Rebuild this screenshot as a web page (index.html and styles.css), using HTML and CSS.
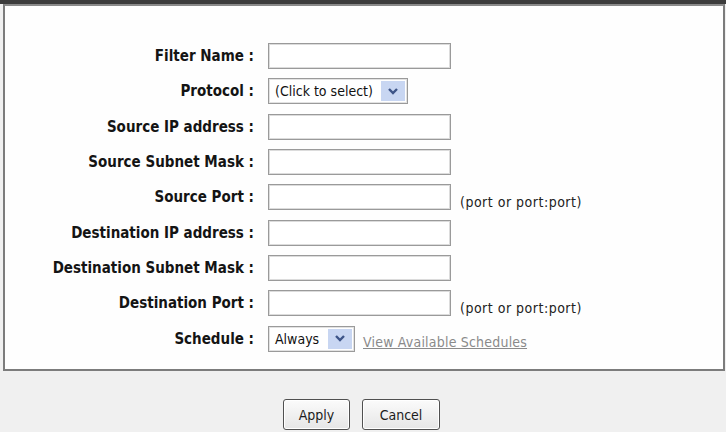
FILE: index.html
```html
<!DOCTYPE html>
<html>
<head>
<meta charset="utf-8">
<link rel="stylesheet" href="styles.css">
</head>
<body>
<div class="topbar"></div>
<div class="box">
  <div class="form">
    <div class="label">Filter Name :</div>
    <div class="field"><span class="input"></span></div>

    <div class="label">Protocol :</div>
    <div class="field"><span class="select select-protocol"><span class="select-text">(Click to select)</span><span class="arrow"><svg width="12" height="9" viewBox="0 0 12 9"><path d="M2 2 L6 6 L10 2" fill="none" stroke="#3d5488" stroke-width="2.4"/></svg></span></span></div>

    <div class="label">Source IP address :</div>
    <div class="field"><span class="input"></span></div>

    <div class="label">Source Subnet Mask :</div>
    <div class="field"><span class="input"></span></div>

    <div class="label">Source Port :</div>
    <div class="field"><span class="input"></span><span class="hint">(port or port:port)</span></div>

    <div class="label">Destination IP address :</div>
    <div class="field"><span class="input"></span></div>

    <div class="label">Destination Subnet Mask :</div>
    <div class="field"><span class="input"></span></div>

    <div class="label">Destination Port :</div>
    <div class="field"><span class="input"></span><span class="hint">(port or port:port)</span></div>

    <div class="label">Schedule :</div>
    <div class="field"><span class="select select-schedule"><span class="select-text">Always</span><span class="arrow"><svg width="12" height="9" viewBox="0 0 12 9"><path d="M2 2 L6 6 L10 2" fill="none" stroke="#3d5488" stroke-width="2.4"/></svg></span></span><a class="link" href="#">View Available Schedules</a></div>
  </div>
</div>
<div class="actions">
  <button class="btn btn-apply">Apply</button>
  <button class="btn btn-cancel">Cancel</button>
</div>
</body>
</html>
```

FILE: styles.css
```css
html, body {
  margin: 0;
  padding: 0;
}
body {
  width: 726px;
  height: 432px;
  overflow: hidden;
  background: #f0f0f0;
  font-family: "DejaVu Sans Condensed", "DejaVu Sans", sans-serif;
  color: #1c1c1c;
}
.topbar {
  height: 4px;
  background: #3c3c3c;
}
.box {
  margin: 0 1px 0 3px;
  height: 363px;
  border: 2px solid #7c7c7c;
  border-top-color: #8a8a8a;
  background: #fefefe;
  box-sizing: content-box;
}
.form {
  display: grid;
  grid-template-columns: 249px 1fr;
  grid-auto-rows: 35.35px;
  column-gap: 14px;
  padding-top: 32.3px;
}
.label {
  font-weight: bold;
  font-size: 15px;
  color: #141414;
  text-align: right;
  display: flex;
  align-items: center;
  justify-content: flex-end;
  white-space: nowrap;
}
.field {
  display: flex;
  align-items: center;
}
.input {
  display: block;
  width: 183px;
  height: 26px;
  box-sizing: border-box;
  border: 1px solid #9a9a9a;
  box-shadow: inset 0 0 0 1px #dcdcdc;
  background: #fff;
}
.select {
  display: flex;
  align-items: center;
  height: 26px;
  box-sizing: border-box;
  border: 1px solid #9a9a9a;
  box-shadow: inset 0 0 0 1px #e2e2e2;
  background: #fff;
  padding: 2px;
}
.select-protocol { width: 140px; }
.select-schedule { width: 87px; }
.select-text {
  flex: 1;
  font-size: 14px;
  padding-left: 4px;
  white-space: nowrap;
  color: #111;
}
.arrow {
  width: 24px;
  height: 20px;
  background: #c8d6f2;
  display: flex;
  align-items: center;
  justify-content: center;
}
.hint {
  font-size: 14px;
  letter-spacing: 0.5px;
  margin-left: 9px;
  margin-top: 9px;
  color: #222;
  white-space: nowrap;
}
.link {
  font-size: 14px;
  letter-spacing: 0.2px;
  margin-left: 8px;
  margin-top: 6px;
  color: #8a8a8a;
  text-decoration: underline;
  white-space: nowrap;
}
.actions {
  display: flex;
  justify-content: center;
  gap: 12px;
  margin-top: 28px;
  padding-right: 3px;
}
.btn {
  height: 31px;
  box-sizing: border-box;
  border: 1px solid #505050;
  border-radius: 3px;
  background: linear-gradient(#fbfbfb, #e6e6e6);
  box-shadow: inset 0 0 0 1px #fff;
  font-family: "DejaVu Sans Condensed", "DejaVu Sans", sans-serif;
  font-size: 14px;
  color: #1c1c1c;
  padding: 0;
}
.btn-apply { width: 67px; }
.btn-cancel { width: 78px; }
```
